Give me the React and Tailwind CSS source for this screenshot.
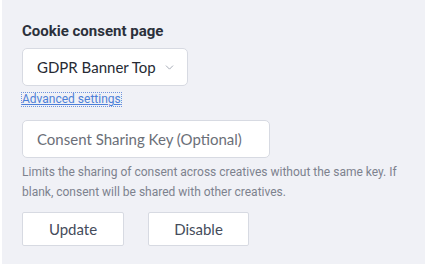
import { ChevronDown } from 'lucide-react';

const font = { fontFamily: 'Roboto, "Liberation Sans", sans-serif' };
const big = { fontFamily: 'Lato, Roboto, "Liberation Sans", sans-serif' };

export default function App() {
  return (
    <div className="h-[264px] w-[427px] bg-white px-[2px]" style={font}>
      <div className="h-full bg-[#f0f1f6] pl-[20px] pt-[21px]">
        <h2 className="text-[15px] font-bold leading-[20px] text-[#2b303b]">Cookie consent page</h2>

        <button
          style={big}
          className="mt-[7px] flex h-[38px] w-[166px] items-center justify-between whitespace-nowrap rounded-[5px] border border-[#d7dae2] bg-white pl-[14px] pr-[11px] text-[15px] text-[#262a33]"
        >
          <span>GDPR Banner Top</span>
          <ChevronDown size={13} strokeWidth={1.6} className="text-[#9aa0ad]" />
        </button>

        <div className="mt-[7px] flex">
          <a href="#" className="text-[12px] leading-[13px] text-[#4d7fd8] underline outline outline-1 outline-dotted outline-[#6f95de]">
            Advanced settings
          </a>
        </div>

        <input
          type="text"
          style={big}
          placeholder="Consent Sharing Key (Optional)"
          className="mt-[14px] block h-[38px] w-[248px] rounded-[5px] border border-[#d7dae2] bg-white px-[14px] text-[15px] text-[#262a33] placeholder:text-[#6b6f78] outline-none"
        />

        <p className="mt-[4px] w-[380px] text-[12px] leading-[20px] text-[#7d828e]">
          Limits the sharing of consent across creatives without the same key. If blank, consent will be shared with other creatives.
        </p>

        <div className="mt-[10px] flex gap-[24px]" style={big}>
          <button className="h-[34px] w-[102px] rounded-[2px] border border-[#d7dae2] bg-white text-[15px] text-[#454c5b]">
            Update
          </button>
          <button className="h-[34px] w-[101px] rounded-[2px] border border-[#d7dae2] bg-white text-[15px] text-[#454c5b]">
            Disable
          </button>
        </div>
      </div>
    </div>
  );
}
